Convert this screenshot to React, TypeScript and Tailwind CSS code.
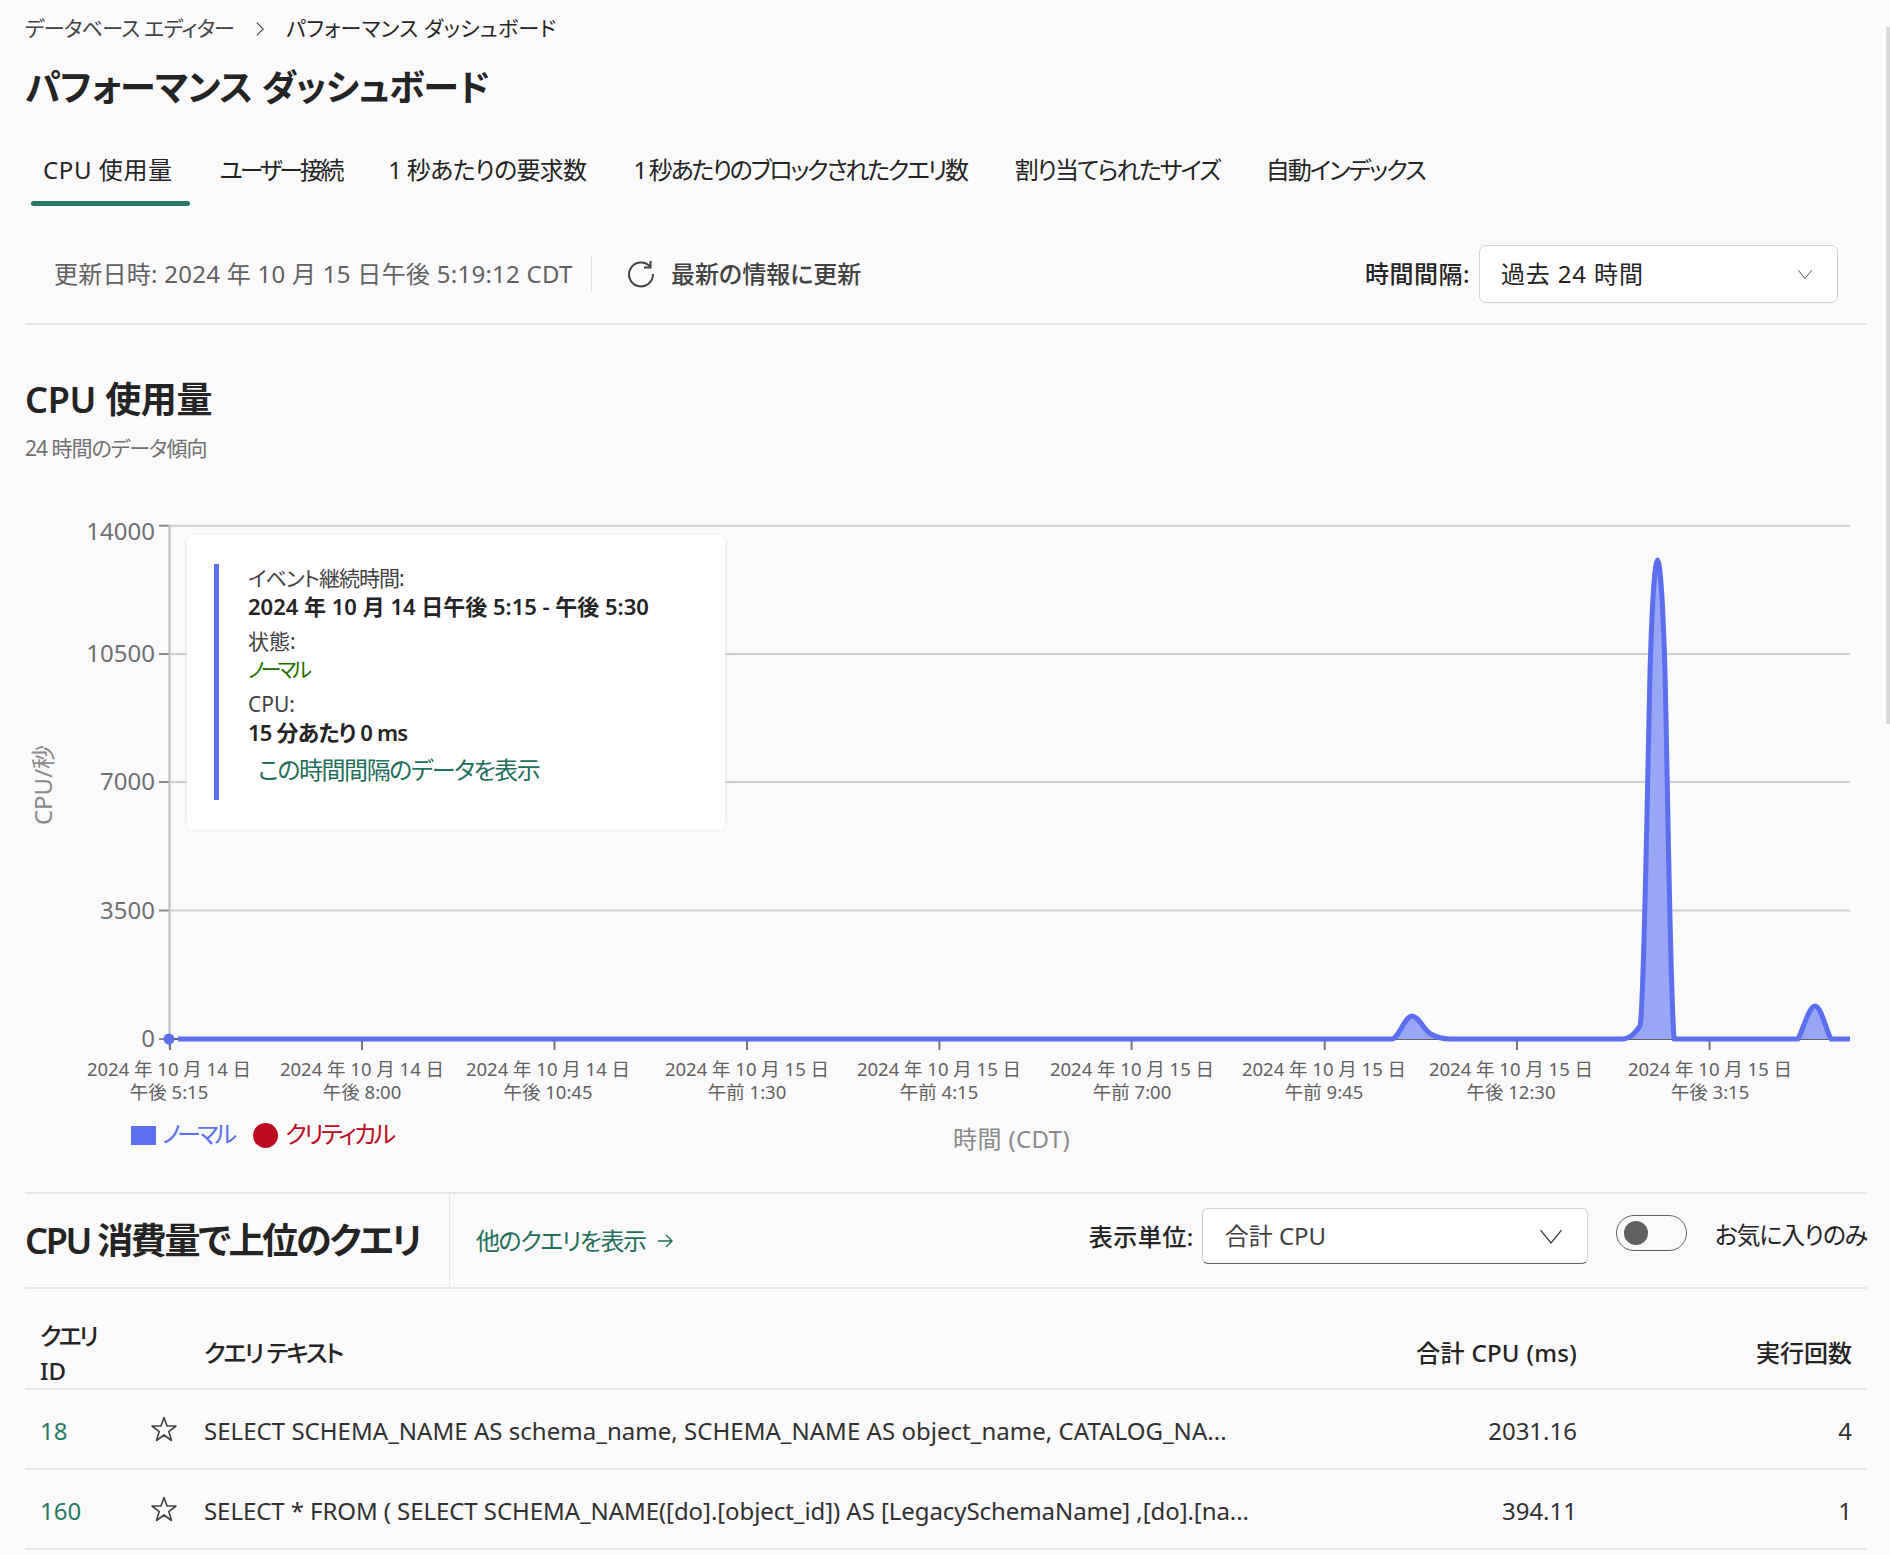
import { ReactNode } from "react";

const xTicks = [170, 362, 554.5, 747, 939.4, 1131.6, 1324.7, 1517, 1709.6];

const xLabels = [
  { cx: 169, top: "2024 年 10 月 14 日", bottom: "午後 5:15" },
  { cx: 362, top: "2024 年 10 月 14 日", bottom: "午後 8:00" },
  { cx: 548, top: "2024 年 10 月 14 日", bottom: "午後 10:45" },
  { cx: 747, top: "2024 年 10 月 15 日", bottom: "午前 1:30" },
  { cx: 939, top: "2024 年 10 月 15 日", bottom: "午前 4:15" },
  { cx: 1132, top: "2024 年 10 月 15 日", bottom: "午前 7:00" },
  { cx: 1324, top: "2024 年 10 月 15 日", bottom: "午前 9:45" },
  { cx: 1511, top: "2024 年 10 月 15 日", bottom: "午後 12:30" },
  { cx: 1710, top: "2024 年 10 月 15 日", bottom: "午後 3:15" },
];

const yTicks = [
  { y: 525.7, labelY: 532, label: "14000" },
  { y: 654, labelY: 654, label: "10500" },
  { y: 782, labelY: 782, label: "7000" },
  { y: 910.5, labelY: 910.5, label: "3500" },
  { y: 1039, labelY: 1039, label: "0" },
];

const curve =
  "M178 1039 L1392 1039 C1398 1039 1405 1016 1412 1016 C1419 1016 1424 1031 1431 1034 C1436 1037 1442 1039 1450 1039 L1622 1039 C1630 1039 1635 1033 1640 1026 C1644 1010 1647 800 1650 673 C1652 600 1655 560 1657.5 560 C1660 560 1663 600 1665 673 C1668 800 1670 980 1674 1039 L1798 1039 C1803 1030 1809 1006 1815 1006 C1821 1006 1826 1030 1831 1039 L1850 1039";

const tabs = [
  { label: "CPU 使用量", style: "mr-[-4px] pr-[17px] tracking-[0.6px]" },
  { label: "ユーザー接続", style: "ml-[22px] tracking-[-3.3px]" },
  { label: "1 秒あたりの要求数", style: "ml-[23px] tracking-[-0.7px]" },
  { label: "1 秒あたりのブロックされたクエリ数", style: "ml-[23px] tracking-[-2.3px]" },
  { label: "割り当てられたサイズ", style: "ml-[24px] tracking-[-1.8px]" },
  { label: "自動インデックス", style: "ml-[22px] tracking-[-1.9px]" },
];

const rows = [
  {
    id: "18",
    text: "SELECT SCHEMA_NAME AS schema_name, SCHEMA_NAME AS object_name, CATALOG_NA...",
    tracking: "tracking-[0.03px]",
    cpu: "2031.16",
    count: "4",
  },
  {
    id: "160",
    text: "SELECT * FROM ( SELECT SCHEMA_NAME([do].[object_id]) AS [LegacySchemaName] ,[do].[na...",
    tracking: "tracking-[-0.07px]",
    cpu: "394.11",
    count: "1",
  },
];

const Chevron = ({ className }: { className: string }) => (
  <svg viewBox="0 0 24 24" fill="none" stroke="currentColor" strokeWidth="1.2" className={className}>
    <path d="M3 7 L12 18 L21 7" />
  </svg>
);

const StarOutline = () => (
  <svg viewBox="0 0 28 28" fill="none" stroke="#424242" strokeWidth="1.6" className="h-7 w-7">
    <path d="M14 2.5 L17 11 L26 11 L18.8 16.6 L21.5 25.5 L14 20 L6.5 25.5 L9.2 16.6 L2 11 L11 11 Z" strokeLinejoin="round" />
  </svg>
);

const TooltipField = ({ label, children, labelClass }: { label: string; children: ReactNode; labelClass?: string }) => (
  <div className="mb-[7px] leading-[28px]">
    <div className={`text-[21px] text-[#424242] ${labelClass ?? ""}`}>{label}</div>
    {children}
  </div>
);

export default function App() {
  return (
    <div className="relative h-[1555px] w-[1890px] overflow-hidden bg-[#fafafa] pl-[25px] pr-[23px] text-[#242424] [font-family:'Noto_Sans','Noto_Sans_CJK_JP',sans-serif] [font-feature-settings:'palt']">
      <div className="absolute right-0 top-[27px] h-[697px] w-[4px] bg-[#d9d9d9]" />

      <nav className="flex h-[58px] items-center text-[21px]">
        <span className="tracking-[-0.7px] text-[#424242]">データベース エディター</span>
        <svg viewBox="0 0 12 20" fill="none" stroke="#424242" strokeWidth="1.4" className="mx-[21px] h-[16px] w-[10px]">
          <path d="M2 2 L10 10 L2 18" />
        </svg>
        <span className="tracking-[0.25px]">パフォーマンス ダッシュボード</span>
      </nav>

      <h1 className="flex h-[58px] items-center pt-[2px] text-[36px] font-semibold tracking-[-0.55px]">パフォーマンス ダッシュボード</h1>

      <div className="mt-[24px] flex h-[66px] pl-[6px]">
        {tabs.map((tab, i) => (
          <div
            key={tab.label}
            className={`relative flex items-center whitespace-nowrap pb-[6px] pl-[12px] text-[24px] ${i === 0 ? "" : "pr-[12px]"} ${tab.style}`}
          >
            {tab.label}
            {i === 0 && <div className="absolute bottom-0 left-0 h-[5px] w-full rounded-full bg-[#267a64]" />}
          </div>
        ))}
      </div>

      <div className="mt-[20px] flex h-[99px] items-center border-b-2 border-[#e6e6e6] pb-[2px]">
        <span className="w-[566px] whitespace-nowrap pl-[29px] text-[24px] tracking-[0.27px] text-[#616161]">更新日時: 2024 年 10 月 15 日午後 5:19:12 CDT</span>
        <div className="h-[35px] w-px bg-[#e0e0e0]" />
        <svg viewBox="0 0 28 28" fill="none" stroke="#424242" strokeWidth="2" className="ml-[35px] h-[28px] w-[28px]">
          <path d="M23 6.5 A12 12 0 1 0 26 14" />
          <path d="M23.5 1 V7.5 H17" />
        </svg>
        <span className="ml-[16px] text-[24px] font-medium text-[#424242]">最新の情報に更新</span>
        <span className="ml-auto text-[24px] font-medium tracking-[0.5px]">時間間隔:</span>
        <div className="ml-[9px] mr-[29px] flex h-[58px] w-[359px] items-center justify-between rounded-[7px] border border-[#d1d1d1] bg-white pl-[21px] pr-[23px]">
          <span className="text-[24px] tracking-[0.85px]">過去 24 時間</span>
          <Chevron className="h-[18px] w-[18px] text-[#424242]" />
        </div>
      </div>

      <h2 className="mt-[51px] flex h-[48px] items-center text-[36px] font-semibold tracking-[-0.3px]">CPU 使用量</h2>
      <p className="mt-[1px] flex h-[48px] items-center text-[21px] tracking-[-1px] text-[#707070]">24 時間のデータ傾向</p>

      <div className="relative mt-[27px]">
        <svg viewBox="25 500 1842 605" className="block h-[605px] w-[1842px]">
          {yTicks.map((t) => (
            <g key={t.label}>
              <line x1="159" x2="170" y1={t.y} y2={t.y} stroke="#8a8a8a" strokeWidth="2" />
              {t.label !== "0" && <line x1="170" x2="1850" y1={t.y} y2={t.y} stroke="#cfcfcf" strokeWidth="2" />}
              <text x="155" y={t.labelY + 8} textAnchor="end" className="fill-[#707070] text-[24px]">
                {t.label}
              </text>
            </g>
          ))}
          <line x1="169.5" x2="169.5" y1="525" y2="1049" stroke="#bdbdbd" strokeWidth="2" />
          <line x1="170" x2="1850" y1="1039" y2="1039" stroke="#616161" strokeWidth="2" />
          {xTicks.map((x) => (
            <line key={x} x1={x} x2={x} y1="1039" y2="1050" stroke="#757575" strokeWidth="2" />
          ))}
          {xLabels.map((l) => (
            <text key={l.cx} textAnchor="middle" className="fill-[#616161] text-[18.5px]">
              <tspan x={l.cx} y="1076">
                {l.top}
              </tspan>
              <tspan x={l.cx} y="1099">
                {l.bottom}
              </tspan>
            </text>
          ))}
          <text transform="translate(52 785) rotate(-90)" textAnchor="middle" className="fill-[#8a8a8a] text-[24px]">
            CPU/秒
          </text>
          <path d={`${curve} Z`} fill="#98a7f3" />
          <path d={curve} fill="none" stroke="#5b6ff0" strokeWidth="5" strokeLinejoin="round" />
          <circle cx="169" cy="1039" r="5.5" fill="#5b6ff0" />
        </svg>

        <div className="absolute left-[162px] top-[35px] flex h-[295px] w-[538px] rounded-[8px] bg-white pl-[27px] pt-[29px] shadow-[0_0_4px_rgba(0,0,0,0.08)]">
          <div className="h-[236px] w-[5px] bg-[#5b6ff0]" />
          <div className="ml-[29px]">
            <TooltipField label="イベント継続時間:" labelClass="tracking-[-0.95px]">
              <div className="text-[22px] font-semibold">2024 年 10 月 14 日午後 5:15 - 午後 5:30</div>
            </TooltipField>
            <TooltipField label="状態:">
              <div className="mb-[1px] text-[21px] tracking-[-3.9px] text-[#1f7000]">ノーマル</div>
            </TooltipField>
            <TooltipField label="CPU:">
              <div className="text-[22px] font-semibold tracking-[-0.8px]">15 分あたり 0 ms</div>
            </TooltipField>
            <div className="ml-[10px] text-[24px] leading-[34px] tracking-[-1.45px] text-[#1f6f5b]">この時間間隔のデータを表示</div>
          </div>
        </div>
      </div>

      <div className="mt-[14px] flex h-[32px] items-center">
        <div className="flex w-[928px] items-center">
          <div className="ml-[106px] h-[19px] w-[25px] bg-[#5b6ff0]" />
          <span className="mb-[3px] ml-[6px] text-[24px] tracking-[-3.8px] text-[#5b6ff0]">ノーマル</span>
          <div className="ml-[20px] h-[25px] w-[25px] rounded-full bg-[#bc0a1f]" />
          <span className="mb-[3px] ml-[7px] text-[24px] tracking-[-2.8px] text-[#bc0a1f]">クリティカル</span>
        </div>
        <span className="mt-[8px] text-[24px] tracking-[0.4px] text-[#8a8a8a]">時間 (CDT)</span>
      </div>

      <div className="mt-[41px] flex h-[97px] items-center border-y-2 border-[#e6e6e6]">
        <h2 className="flex h-full w-[425px] items-center whitespace-nowrap border-r border-[#e6e6e6] text-[36px] font-semibold tracking-[-2.3px]">
          CPU 消費量で上位のクエリ
        </h2>
        <span className="ml-[26px] text-[24px] tracking-[-1.5px] text-[#1f6f5b]">他のクエリを表示</span>
        <svg viewBox="0 0 16 16" fill="none" stroke="#1f6f5b" strokeWidth="1.4" className="ml-[11px] h-[16px] w-[16px]">
          <path d="M1 8 H15 M9 2 L15 8 L9 14" />
        </svg>
        <span className="mb-[7px] ml-auto text-[24px] font-medium tracking-[0.5px]">表示単位:</span>
        <div className="mb-[9px] ml-[8px] flex h-[56px] w-[386px] items-center justify-between rounded-[6px] border border-[#d1d1d1] border-b-[#616161] bg-white pl-[22px] pr-[22px]">
          <span className="text-[24px] text-[#424242]">合計 CPU</span>
          <Chevron className="h-[28px] w-[28px] text-[#424242]" />
        </div>
        <div className="mb-[16px] ml-[28px] flex h-[36px] w-[71px] items-center rounded-full border border-[#616161] pl-[7px]">
          <div className="h-[24px] w-[24px] rounded-full bg-[#616161]" />
        </div>
        <span className="mb-[12px] ml-[28px] whitespace-nowrap text-[24px] tracking-[-1.2px]">お気に入りのみ</span>
      </div>

      <table className="w-[1842px] table-fixed border-collapse text-[24px]">
        <thead>
          <tr className="h-[99px] border-b-2 border-[#e6e6e6]">
            <th className="w-[109px] pl-[15px] pt-[29px] text-left text-[24px] font-medium leading-[35px]">
              <span className="tracking-[-2.8px]">クエリ</span>
              <br />
              ID
            </th>
            <th className="w-[56px]" />
            <th className="pl-[14px] pt-[29px] text-left text-[24px] font-medium tracking-[-2px]">クエリ テキスト</th>
            <th className="w-[290px] pt-[29px] text-right text-[24px] font-medium tracking-[0.3px]">合計 CPU (ms)</th>
            <th className="w-[290px] pr-[15px] pt-[29px] text-right text-[24px] font-medium">実行回数</th>
          </tr>
        </thead>
        <tbody>
          {rows.map((row) => (
            <tr key={row.id} className="h-[80px] border-b-2 border-[#e6e6e6]">
              <td className="pl-[15px] pt-[3px] text-[#267a64]">{row.id}</td>
              <td>
                <div className="flex justify-center pl-[4px]">
                  <StarOutline />
                </div>
              </td>
              <td className={`whitespace-nowrap pl-[14px] pt-[3px] text-[#303030] ${row.tracking}`}>{row.text}</td>
              <td className="pt-[3px] text-right text-[#303030]">{row.cpu}</td>
              <td className="pr-[15px] pt-[3px] text-right text-[#303030]">{row.count}</td>
            </tr>
          ))}
        </tbody>
      </table>
    </div>
  );
}
